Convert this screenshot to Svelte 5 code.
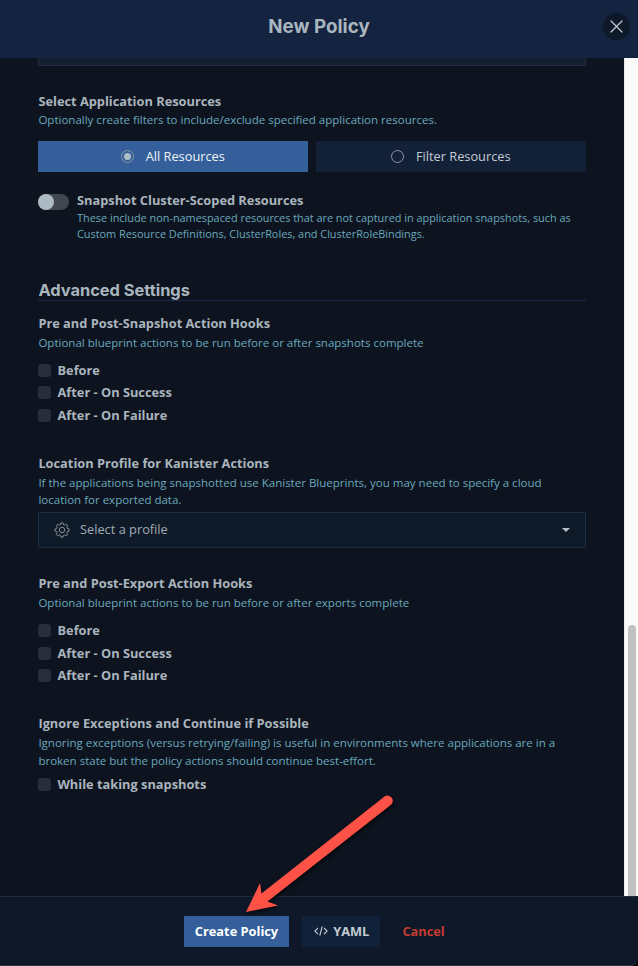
<script>
  const hooks = ['Before', 'After - On Success', 'After - On Failure'];
</script>

<div class="modal">
  <header>
    <h1>New Policy</h1>
    <button class="close" aria-label="Close">
      <svg width="13" height="13" viewBox="0 0 13 13"><path d="M1 1 12 12M12 1 1 12" /></svg>
    </button>
  </header>

  <div class="body">
    <main>
      <div class="field-end"></div>

      <section class="resources">
        <h3>Select Application Resources</h3>
        <p class="first">Optionally create filters to include/exclude specified application resources.</p>
        <div class="tabs">
          <div class="tab on"><span class="radio"><i></i></span><span class="name">All Resources</span></div>
          <div class="tab"><span class="radio"></span><span class="name">Filter Resources</span></div>
        </div>
      </section>

      <section class="scoped">
        <div class="toggle"><i></i></div>
        <div>
          <h3>Snapshot Cluster-Scoped Resources</h3>
          <p>These include non-namespaced resources that are not captured in application snapshots, such as<br />Custom Resource Definitions, ClusterRoles, and ClusterRoleBindings.</p>
        </div>
      </section>

      <h2>Advanced Settings</h2>

      <section class="hooks">
        <h3>Pre and Post-Snapshot Action Hooks</h3>
        <p>Optional blueprint actions to be run before or after snapshots complete</p>
        <div class="checks">
          {#each hooks as label}
            <div class="check"><i></i><span>{label}</span></div>
          {/each}
        </div>
      </section>

      <section class="location">
        <h3>Location Profile for Kanister Actions</h3>
        <p>If the applications being snapshotted use Kanister Blueprints, you may need to specify a cloud<br />location for exported data.</p>
        <div class="select">
          <svg class="gear" width="16" height="16" viewBox="0 0 16 16">
            <path d="M6.9.9h2.2l.4 1.8 1.2.5 1.6-1 1.5 1.5-1 1.6.5 1.2 1.8.4v2.2l-1.8.4-.5 1.2 1 1.6-1.5 1.5-1.6-1-1.2.5-.4 1.8H6.9l-.4-1.8-1.2-.5-1.6 1-1.5-1.5 1-1.6-.5-1.2L.9 9.1V6.9l1.8-.4.5-1.2-1-1.6 1.5-1.5 1.6 1 1.2-.5z" />
            <circle cx="8" cy="8" r="2.7" />
          </svg>
          <span class="name">Select a profile</span>
          <svg class="caret" width="8" height="4" viewBox="0 0 8 4"><path d="M0 0h8L4 4z" /></svg>
        </div>
      </section>

      <section class="hooks export">
        <h3>Pre and Post-Export Action Hooks</h3>
        <p>Optional blueprint actions to be run before or after exports complete</p>
        <div class="checks">
          {#each hooks as label}
            <div class="check"><i></i><span>{label}</span></div>
          {/each}
        </div>
      </section>

      <section class="ignore">
        <h3>Ignore Exceptions and Continue if Possible</h3>
        <p>Ignoring exceptions (versus retrying/failing) is useful in environments where applications are in a<br />broken state but the policy actions should continue best-effort.</p>
        <div class="check"><i></i><span>While taking snapshots</span></div>
      </section>
    </main>
    <div class="scrollbar"><div class="thumb"></div></div>
  </div>

  <div class="footer-wrap">
    <footer>
      <button class="primary">Create Policy</button>
      <button class="yaml">
        <svg width="14" height="10" viewBox="0 0 14 10"><path d="M4 1.8.9 5 4 8.2M10 1.8 13.1 5 10 8.2M8.2.5 5.8 9.5" /></svg>
        <span>YAML</span>
      </button>
      <button class="cancel">Cancel</button>
    </footer>
  </div>

  <svg class="arrow" width="170" height="140" viewBox="235 785 170 140">
    <path d="M384.5 796.6 A5.2 5.2 0 0 1 390.7 805 L267.5 901.5 L278 905.5 L246 912 L260 883 L261.5 893.5 Z" />
  </svg>
</div>

<style>
  :global(body) { background: #000; }
  .modal {
    position: relative;
    width: 638px;
    height: 966px;
    display: flex;
    flex-direction: column;
    overflow: hidden;
    background: #0d1420;
    font-family: 'Open Sans', 'Noto Sans', sans-serif;
    color: #aab4bd;
  }
  h1, h2, h3, p { margin: 0; white-space: nowrap; }
  button { border: 0; padding: 0; font: inherit; }

  header {
    position: relative;
    height: 58px;
    flex: none;
    box-sizing: border-box;
    padding-bottom: 5px;
    display: flex;
    align-items: center;
    justify-content: center;
    background: #14233f;
  }
  h1 {
    font: 700 18.8px/24px Inter, Roboto, sans-serif;
    color: #a9b6be;
  }
  .close {
    position: absolute;
    right: 8px;
    top: 13px;
    width: 27px;
    height: 27px;
    border-radius: 50%;
    background: #0d1829;
    display: flex;
    align-items: center;
    justify-content: center;
  }
  .close path { stroke: #c5ced4; stroke-width: 1.2; fill: none; stroke-linecap: round; }

  .body { height: 838px; flex: none; display: flex; }
  main { width: 548px; padding: 0 38px; flex: none; }
  .field-end {
    height: 7px;
    border: 1px solid #202c3e;
    border-top: 0;
    background: #142032;
  }
  .scrollbar {
    width: 14px;
    box-sizing: border-box;
    border-left: 1px solid #e8e8e8;
    background: #fafafa;
    padding: 567px 2px 0 3px;
    display: flex;
  }
  .thumb { width: 8px; height: 271px; border-radius: 4px 4px 0 0; background: #c1c1c1; }

  h3 { font-size: 12.8px; line-height: 16px; padding-bottom: 2px; font-weight: 700; }
  p { font-size: 11.53px; line-height: 16px; color: #6ba8bc; }
  section > h3, section > p { padding-left: 0.4px; }

  .resources { height: 79px; padding-top: 27px; }
  .first { margin-top: 1px; }
  .tabs { display: flex; gap: 8px; margin-top: 13px; }
  .tab {
    width: 270px;
    height: 31px;
    display: flex;
    align-items: center;
    justify-content: center;
    gap: 11.5px;
    background: #122038;
    font-size: 12.8px;
    color: #c3cbd2;
  }
  .name { padding-bottom: 2px; }
  .tab.on { background: #345f9a; color: #f0f4f8; }
  .radio {
    width: 11px;
    height: 11px;
    border: 1px solid #8c98a3;
    border-radius: 50%;
    display: flex;
    align-items: center;
    justify-content: center;
  }
  .radio i { width: 7px; height: 7px; border-radius: 50%; background: #b0bfc8; }

  .scoped { display: flex; gap: 8px; padding-top: 20px; height: 51px; margin-top: 0; }
  .scoped p { font-size: 10.88px; }
  .toggle { width: 31px; height: 16px; border-radius: 8px; background: #41474f; margin-top: 2px; }
  .toggle i { display: block; width: 16px; height: 16px; border-radius: 50%; background: #adbac3; }

  h2 {
    margin-top: 36px;
    height: 21px;
    border-bottom: 1px solid #1c2c4a;
    font: 700 16.4px/23px Inter, Roboto, sans-serif;
    padding-left: 0.4px;
    color: #a9b6be;
  }

  .hooks { padding-top: 14px; }
  .hooks p { margin-top: 2px; }
  .checks { margin-top: 7.5px; }
  .check { display: flex; align-items: center; gap: 6.5px; height: 22.5px; font-size: 12.8px; font-weight: 700; }
  .check i { width: 13px; height: 13px; margin-top: 1px; border-radius: 3px; background: #272d39; }

  .location { padding-top: 28.5px; }
  .location p { line-height: 17px; margin-top: 1px; }
  .select {
    height: 34px;
    margin-top: 4px;
    border: 1px solid #1d2a43;
    background: #0f1a29;
    display: flex;
    align-items: center;
    padding: 0 15px;
    font-size: 12.8px;
    color: #a0abb4;
  }
  .gear { fill: none; stroke: #8f9ba5; stroke-width: 0.9; margin-right: 10px; }
  .caret { margin-left: auto; fill: #b4bfc7; }
  .export { padding-top: 27px; }
  .export .checks { margin-top: 8.5px; }

  .ignore { padding-top: 28.5px; }
  .ignore p { line-height: 17.5px; margin-top: 1px; }
  .ignore .check { margin-top: 4px; }

  .footer-wrap { height: 70px; background: #000; }
  footer {
    height: 70px;
    box-sizing: border-box;
    border-top: 1px solid #1c2b46;
    border-bottom: 1px solid #303846;
    border-bottom-right-radius: 8px;
    background: #0f1828;
    display: flex;
    align-items: center;
    padding-left: 184px;
    font-size: 12.8px;
    font-weight: 700;
  }
  .primary { width: 105px; height: 31px; background: #345f9a; color: #fff; }
  .yaml {
    width: 78px;
    height: 31px;
    margin-left: 13px;
    box-sizing: border-box;
    padding-left: 1.5px;
    background: #11213a;
    color: #c3cbd2;
    display: flex;
    align-items: center;
    justify-content: center;
    gap: 5px;
  }
  .yaml path { fill: none; stroke: #c3cbd2; stroke-width: 1.1; }
  .cancel { background: none; color: #c33c32; margin-left: 22.4px; }

  .arrow { position: absolute; left: 235px; top: 785px; filter: drop-shadow(1px 2px 2px rgba(0, 0, 0, 0.7)); }
  .arrow path { fill: #ff5247; }
</style>
